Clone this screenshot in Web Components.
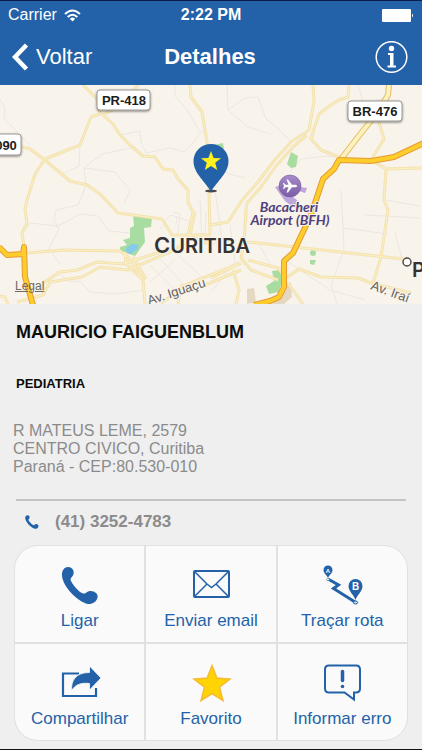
<!DOCTYPE html>
<html lang="pt-BR">
<head>
<meta charset="utf-8">
<meta name="viewport" content="width=device-width, initial-scale=1">
<title>Detalhes</title>
<style>
  body {
    --blue: #2362a8;
    --line: #e1e1e2;
    margin: 0;
    min-height: 100vh;
    box-sizing: border-box;
    border-bottom: 1px solid #111;
    background: #efefef;
    font-family: "Liberation Sans", Arial, sans-serif;
  }
</style>
</head>
<body>

<template id="status-bar-tpl">
  <style>
    :host {
      display: grid;
      grid-template-columns: 1fr auto 1fr;
      align-items: center;
      height: 28px;
      padding: 0 8px;
      border-top: 1px solid #0b1c46;
      background: var(--blue);
      color: white;
      font-size: 16px;
      line-height: 18px;
    }
    .carrier {
      display: flex;
      align-items: center;
      gap: 7px;
    }
    .time {
      font-weight: bold;
    }
    .battery {
      justify-self: end;
    }
    svg {
      display: block;
    }
  </style>
  <div class="carrier">
    <slot name="carrier"></slot>
    <svg width="17" height="13" viewBox="0 0 17 13" fill="none" stroke="white" stroke-width="2">
      <path d="M1 5Q8.500-2 16 5M3.700 8Q8.500 3.500 13.300 8"/>
      <path d="M8.500 12.500L5.800 9.700Q8.500 7.500 11.200 9.700Z" fill="white" stroke="none"/>
    </svg>
  </div>
  <div class="time"><slot name="time"></slot></div>
  <svg class="battery" width="32" height="13" viewBox="0 0 32 13" fill="white">
    <rect width="29" height="13" rx="1"/>
    <path d="M30 4.500Q32 6.500 30 8.500Z"/>
  </svg>
</template>

<template id="nav-bar-tpl">
  <style>
    :host {
      display: grid;
      grid-template-columns: 1fr auto 1fr;
      align-items: center;
      height: 56px;
      padding: 0 14px 0 12px;
      background: var(--blue);
      color: white;
    }
    a {
      display: flex;
      align-items: center;
      gap: 7px;
      color: white;
      font-size: 22px;
      text-decoration: none;
    }
    h1 {
      margin: 0;
      font-size: 22px;
      font-weight: bold;
    }
    button {
      justify-self: end;
      padding: 0;
      border: 0;
      background: none;
    }
    svg {
      display: block;
    }
  </style>
  <a href="#">
    <svg width="17" height="28" viewBox="0 0 17 28" fill="none" stroke="white" stroke-width="4.500">
      <path d="M14.500 2L3 14L14.500 26"/>
    </svg>
    <slot name="back"></slot>
  </a>
  <h1><slot></slot></h1>
  <button type="button" aria-label="Informações">
    <svg width="33" height="33" viewBox="0 0 33 33">
      <circle cx="16.500" cy="16" r="15.300" fill="none" stroke="white" stroke-width="1.500"/>
      <circle cx="16.500" cy="7.500" r="2.700" fill="white"/>
      <path d="M13 12H18.500V24.500H21V26.500H12.500V24.500H15V14H13Z" fill="white"/>
    </svg>
  </button>
</template>

<template id="place-map-tpl">
  <style>
    :host {
      display: block;
      position: relative;
      height: 219px;
      overflow: hidden;
      background: #f8f3eb;
    }
    svg {
      display: block;
      width: 100%;
      height: 100%;
    }
    a {
      position: absolute;
      left: 15px;
      bottom: 11px;
      color: #6c6964;
      font-size: 12px;
      line-height: 14px;
    }
    .lane {
      stroke: #ece7e1;
      stroke-width: 1;
    }
    .case {
      stroke: #f3e2ae;
      stroke-width: 3;
    }
    .core {
      stroke: #fbf0c8;
      stroke-width: 1;
    }
    .edge {
      stroke: #e79a35;
      stroke-width: 6;
    }
    .fill {
      stroke: #fccd2b;
      stroke-width: 4;
    }
    .sign {
      fill: white;
      stroke: #9b9894;
      stroke-width: 1;
    }
    .code {
      fill: #1c1c1c;
      font-size: 13px;
      font-weight: bold;
      text-anchor: middle;
    }
    .street {
      fill: #65615c;
      stroke: #f8f3eb;
      stroke-width: 2px;
      paint-order: stroke;
      font-size: 13px;
    }
    .airport {
      fill: #503f7d;
      stroke: #f8f3eb;
      stroke-width: 2px;
      paint-order: stroke;
      font: italic bold 14px Lato, sans-serif;
      text-anchor: middle;
    }
    .city {
      fill: #353331;
      stroke: #f8f3eb;
      stroke-width: 2px;
      paint-order: stroke;
      font: 600 20px Inter, sans-serif;
    }
  </style>
  <svg viewBox="0 85 422 219" preserveAspectRatio="xMidYMid slice">
    <defs>
      <linearGradient id="violet" x2="0" y2="1">
        <stop offset="0" stop-color="#a88bc9"/>
        <stop offset="1" stop-color="#7a5ba6"/>
      </linearGradient>
      <filter id="drop" x="-20%" y="-20%" width="140%" height="160%">
        <feDropShadow dx="0" dy="1" stdDeviation="1" flood-opacity="0.5"/>
      </filter>
      <!-- pale roads are drawn twice, as casing and core -->
      <g id="roads">
        <path d="M83 85L97 99L100 114L91 117L80 145L45 159L35 174L27 200L25 210L27 223L22 233L24 247"/>
        <path d="M138 85L120 106L103 115L113 124L120 135L130 145L143 156L155 157L163 169L173 170L178 179L188 190V202L193 212L188 235"/>
        <path d="M22 147L30 149L45 160L70 181L87 185L100 194L118 213L133 215L162 219L172 235H211"/>
        <path d="M190 85L191 97L202 112L207 142L209 192L210 235"/>
        <path d="M313 85L314 102L309 130L291 142L273 162L258 182L243 199L228 222L211 225M307 135L293 147L276 166L261 187L247 203L246 210L244 243L241 258L251 270L278 280"/>
        <path d="M349 85L348 97L339 100L328 107L319 114L314 129L311 139L321 150L339 157"/>
        <path d="M378 119L384 139L371 160L386 169L384 200L388 210L381 257L373 283M386 169L422 168"/>
        <path d="M244 242L258 243L331 251L403 259M211 278L241 263M248 260L278 268L286 278L299 269L321 277L358 278L371 283L411 293"/>
        <path d="M288 283L303 304M233 270L239 290L236 304M188 235L211 245"/>
        <path d="M27 253L63 250L120 251L128 257L143 280L145 304M133 257L146 279"/>
        <path d="M17 302L43 295L50 282L82 277L100 267L128 270L170 252L185 243"/>
        <path d="M43 296V283L60 272L77 270L97 262L123 264L160 252M125 252L126 264L143 280"/>
        <path d="M180 287L241 263M205 285L241 270M0 296L5 297L8 304M195 212L190 235M178 304L180 290L160 304"/>
      </g>
    </defs>

    <g fill="none" stroke-linejoin="round">
      <path class="lane" d="M0 99L5 108L4 118L30 145M120 135L140 131L141 142L146 153L170 148L185 152L205 128M80 145L79 166L62 174M84 168L102 154L136 147M84 168L86 184L83 194M84 168L115 172L130 190L124 204M84 190L78 205L56 210L54 220L59 229L49 248L60 264M27 228L30 223L58 226L80 214L98 216L109 231L130 233M160 229L170 215L192 222M177 216L176 225M175 85V96L186 108L200 132"/>
      <path class="lane" d="M227 85L228 110L245 98L258 97L266 119L280 130L291 142M228 110L248 127L271 134M358 85L364 105L359 119M371 102L388 97M339 157L326 156L301 159L290 172M341 190L343 228L388 234M343 228L344 250L331 285L337 304M385 200L420 206M365 215L420 218M395 233L402 259M215 190L222 240L211 245M230 225L235 262L211 292M259 244L270 264M216 160L229 174L246 178"/>
      <path class="lane" d="M150 265L175 290M160 259L186 287M175 252L205 280M55 270L70 282L80 281L90 292L115 294L145 290M150 282L175 260M288 262L330 290L365 300M200 200L202 240M173 212L180 214L178 234M206 212L205 236"/>
    </g>

    <g fill="#a9dca1">
      <path d="M133 215L152 217L151 227L144 228L145 242L135 256L120 251V247L127 245L123 240L130 238V228L134 226Z"/>
      <path d="M291 152L298 156L296 167L291 168L287 164Z"/>
      <path d="M214 145L223 143L224 149L216 151Z"/>
      <path d="M272 271L280 270L282 280L279 292L269 294L266 286L274 281Z"/>
      <circle cx="313" cy="253" r="3"/>
      <path d="M310 260H316L314 265L310 264Z"/>
    </g>
    <path fill="#86cbea" d="M126 248L132 244L139 245L137 250L130 254L126 252Z"/>
    <path fill="#e5d8c2" d="M284 282L291 283L292 297L284 304H272L282 295ZM247 289L254 288L256 302L247 304Z"/>
    <path fill="#bea6dc" d="M275 187L279 186L297 200L300 210L293 207L285 201ZM300 187L307 188L305 193L299 191Z"/>

    <g fill="none" stroke-linejoin="round">
      <use href="#roads" class="case"/>
      <use href="#roads" class="core"/>
      <path stroke="#e8bd60" stroke-width="6" d="M389 85L388 95L378 112L358 137L341 159"/>
      <path stroke="#fcf2c0" stroke-width="4" d="M389 85L388 95L378 112L358 137L341 159"/>
      <path class="edge" d="M424 143L394 157L371 161L339 160L334 169L323 179L311 215L293 253L284 261V287L279 297L270 301L254 305"/>
      <path class="fill" d="M424 143L394 157L371 161L339 160L334 169L323 179L311 215L293 253L284 261V287L279 297L270 301L254 305"/>
      <path class="edge" d="M-1 247L7 255L23 254L24 247L25 277L33 305"/>
      <path class="fill" d="M-1 247L7 255L23 254L24 247L25 277L33 305"/>
    </g>

    <g filter="url(#drop)">
      <rect class="sign" x="97" y="90" width="53" height="20" rx="3"/>
      <rect class="sign" x="348" y="101" width="54" height="20" rx="3"/>
      <rect class="sign" x="-20" y="134" width="41" height="21" rx="3"/>
    </g>
    <text class="code" x="124" y="105">PR-418</text>
    <text class="code" x="375" y="116">BR-476</text>
    <text class="code" x="6" y="150">090</text>

    <circle cx="290" cy="186" r="11" fill="url(#violet)" stroke="#6d5296" stroke-width="0.500"/>
    <path fill="white" transform="translate(290 186)" d="M7 0Q7-1.200 5-1.200H2L-2-6.500H-3.500L-1.500-1.200H-4.500L-6-3H-7L-6 0L-7 3H-6L-4.500 1.200H-1.500L-3.500 6.500H-2L2 1.200H5Q7 1.200 7 0Z"/>
    <text class="airport"><tspan x="289" y="212">Bacacheri</tspan><tspan x="290" y="225">Airport (BFH)</tspan></text>

    <text class="city" x="154" y="253"><tspan font-size="22">C</tspan><tspan>URITIBA</tspan></text>
    <circle cx="407" cy="262" r="4" fill="white" stroke="#4d4a47" stroke-width="1.500"/>
    <text class="city" x="412" y="277">P</text>
    <text class="street" transform="translate(149 305) rotate(-18)">Av. Iguaçu</text>
    <text class="street" transform="translate(370 289) rotate(20)">Av. Iraí</text>

    <ellipse cx="211" cy="191" rx="6" ry="1.500" fill="#4a4a4a"/>
    <path fill="#2362a8" d="M211 192C207 183 193.500 174 193.500 161A17.500 17 0 0 1 228.500 161C228.500 174 215 183 211 192Z"/>
    <path fill="#fff01e" d="M211 151L213.600 157.900L221 158.200L215.200 162.800L217.200 170L211 165.900L204.800 170L206.800 162.800L201 158.200L208.400 157.900Z"/>
  </svg>
  <a href="#"><slot></slot></a>
</template>

<template id="doctor-info-tpl">
  <style>
    :host {
      display: block;
      padding: 18px 16px 0;
    }
    h2 {
      margin: 0;
      color: #0c0c0c;
      font-size: 18px;
      line-height: 20px;
    }
    h3 {
      margin: 34px 0 30px;
      color: #0c0c0c;
      font-size: 13px;
      line-height: 16px;
    }
    address {
      margin: 0 -3px;
      color: #8b8b8b;
      font-size: 16px;
      font-style: normal;
      line-height: 18px;
    }
    hr {
      height: 2px;
      margin: 23px 0 11px;
      border: 0;
      background: #c3c3c5;
    }
    a {
      display: flex;
      align-items: center;
      gap: 16px;
      padding-left: 9px;
      color: #8b8b8b;
      font-size: 17px;
      font-weight: bold;
      line-height: 20px;
      text-decoration: none;
    }
    svg {
      fill: var(--blue);
    }
  </style>
  <h2><slot name="name"></slot></h2>
  <h3><slot name="specialty"></slot></h3>
  <address><slot name="address"></slot></address>
  <hr>
  <a href="tel:+554132524783">
    <svg width="14" height="14" viewBox="1 1 38 38">
      <path d="M1.500 10C1 5 5 1.500 8 1.500C12 1.500 14.500 5 13.500 8.500C13 11 10.500 12 10.500 14C11 18 20 27.500 24 28.500C27 29 28 25.500 31 25.500C35 25.500 38.500 28.500 37.500 32C36.500 36.500 32 39 28 38.500C17 36 3 21 1.500 10Z"/>
    </svg>
    <slot name="phone"></slot>
  </a>
</template>

<template id="action-grid-tpl">
  <style>
    :host {
      display: grid;
      grid-template-columns: repeat(3, 1fr);
      gap: 2px;
      margin: 13px 14px 8px;
      overflow: hidden;
      border: 1px solid var(--line);
      border-radius: 24px;
      background: var(--line);
    }
  </style>
  <slot></slot>
</template>

<template id="action-tile-tpl">
  <style>
    :host {
      display: block;
      background: #fafafa;
    }
    button {
      display: flex;
      flex-direction: column;
      align-items: center;
      gap: 6px;
      width: 100%;
      height: 96px;
      padding: 19px 0 0;
      border: 0;
      background: none;
      color: var(--blue);
      font-family: inherit;
      font-size: 17px;
      line-height: 20px;
      white-space: nowrap;
    }
    ::slotted(svg) {
      width: 42px;
      height: 40px;
      flex: none;
    }
  </style>
  <button type="button">
    <slot name="icon"></slot>
    <span><slot></slot></span>
  </button>
</template>

<header>
  <status-bar>
    <span slot="carrier">Carrier</span>
    <span slot="time">2:22 PM</span>
  </status-bar>
  <nav-bar><span slot="back">Voltar</span>Detalhes</nav-bar>
</header>

<main>
  <place-map>Legal</place-map>

  <doctor-info>
    <span slot="name">MAURICIO FAIGUENBLUM</span>
    <span slot="specialty">PEDIATRIA</span>
    <span slot="address">R MATEUS LEME, 2579<br>CENTRO CIVICO, Curitiba<br>Paraná - CEP:80.530-010</span>
    <span slot="phone">(41) 3252-4783</span>
  </doctor-info>

  <action-grid>
    <action-tile>
      <svg slot="icon" viewBox="0 0 42 40" fill="#2362a8">
        <path d="M3 11C2.500 6 5 2 9 2C13 2 15.500 5.500 14.500 9C14 11.500 11.500 12.500 11.500 14.500C12 18 20 27.500 24 28.500C27 29 28 26 31.500 26C36 26 39.500 29 38.500 32.500C37.500 37 33 39.500 29 39C18 36.500 4 21.500 3 11Z"/>
      </svg>
      Ligar
    </action-tile>
    <action-tile>
      <svg slot="icon" viewBox="0 0 42 40" fill="none" stroke="#2362a8">
        <rect x="4" y="6" width="35" height="26" rx="1" stroke-width="2"/>
        <path d="M4.500 6.500L17 19L21.500 22.500L26 19L38.500 6.500M4.500 31.500L17 19M38.500 31.500L26 19" stroke-width="1.500"/>
      </svg>
      Enviar email
    </action-tile>
    <action-tile>
      <svg slot="icon" viewBox="0 0 42 40" fill="#2362a8">
        <path d="M7 14L17.500 20L12.500 23.500L34 37" fill="none" stroke="#2362a8" stroke-width="3"/>
        <path d="M7 13C6 10 2.500 8.500 2.500 5A4.500 4.500 0 0 1 11.500 5C11.500 8.500 8 10 7 13Z"/>
        <path d="M34.500 35C33 30 27.500 26.500 27.500 21A7 7 0 0 1 41.500 21C41.500 26.500 36 30 34.500 35Z"/>
        <ellipse cx="7" cy="14.500" rx="1.500" ry="1" fill="#fff" stroke="#2362a8" stroke-width="0.500"/>
        <ellipse cx="34.500" cy="37.500" rx="2.200" ry="1.500" fill="#c9daf0" stroke="#2362a8"/>
        <g fill="white" font-family="Liberation Sans" font-weight="bold" text-anchor="middle">
          <text x="7" y="7.500" font-size="6">A</text>
          <text x="34.500" y="24.500" font-size="10">B</text>
        </g>
      </svg>
      Traçar rota
    </action-tile>
    <action-tile>
      <svg slot="icon" viewBox="0 0 42 40" fill="#2362a8">
        <path d="M20 10.500H4V33H37V25" fill="none" stroke="#2362a8" stroke-width="2.200"/>
        <path d="M12.500 28C12 17 17 9.500 30.500 9.500V3L42 15L30.500 27V20.500C22 19.500 16 21.500 12.500 28Z" stroke="#fafafa" stroke-width="0.800"/>
      </svg>
      Compartilhar
    </action-tile>
    <action-tile>
      <svg slot="icon" viewBox="0 0 42 40">
        <path d="M22 2.500L26.800 15L40 16L29.500 24.200L33 37.500L22 30.500L11 37.500L14.500 24.200L4 16L17.200 15Z" fill="#ffd402" stroke="#f7b934" stroke-width="1.500"/>
      </svg>
      Favorito
    </action-tile>
    <action-tile>
      <svg slot="icon" viewBox="0 0 42 40" fill="none" stroke="#2362a8" stroke-width="2">
        <path d="M8 2.500H35Q39 2.500 39 6.500V25.500Q39 29.500 35 29.500H33V36.500L23.500 29.500H8Q4 29.500 4 25.500V6.500Q4 2.500 8 2.500Z"/>
        <path d="M21.500 8.500V17.500" stroke-width="3.500" stroke-linecap="round"/>
        <circle cx="21.500" cy="23.500" r="1.800" fill="#2362a8" stroke="none"/>
      </svg>
      Informar erro
    </action-tile>
  </action-grid>
</main>

<script>
  // every element clones the template that carries its name
  class TemplateElement extends HTMLElement {
    constructor() {
      super();
      let template = document.querySelector('#' + this.localName + '-tpl');
      let shadow = this.attachShadow({ mode: 'open' });
      shadow.appendChild(document.importNode(template.content, true));
    }
  }

  class StatusBar extends TemplateElement {}
  class NavBar extends TemplateElement {}
  class PlaceMap extends TemplateElement {}
  class DoctorInfo extends TemplateElement {}
  class ActionGrid extends TemplateElement {}

  class ActionTile extends TemplateElement {
    connectedCallback() {
      let btn = this.shadowRoot.querySelector('button');

      btn.addEventListener('click', () => {
        let event = new CustomEvent('action', {
          bubbles: true,
          detail: this.textContent.trim()
        });
        this.dispatchEvent(event);
      });
    }
  }

  customElements.define('status-bar', StatusBar);
  customElements.define('nav-bar', NavBar);
  customElements.define('place-map', PlaceMap);
  customElements.define('doctor-info', DoctorInfo);
  customElements.define('action-grid', ActionGrid);
  customElements.define('action-tile', ActionTile);
</script>
</body>
</html>
